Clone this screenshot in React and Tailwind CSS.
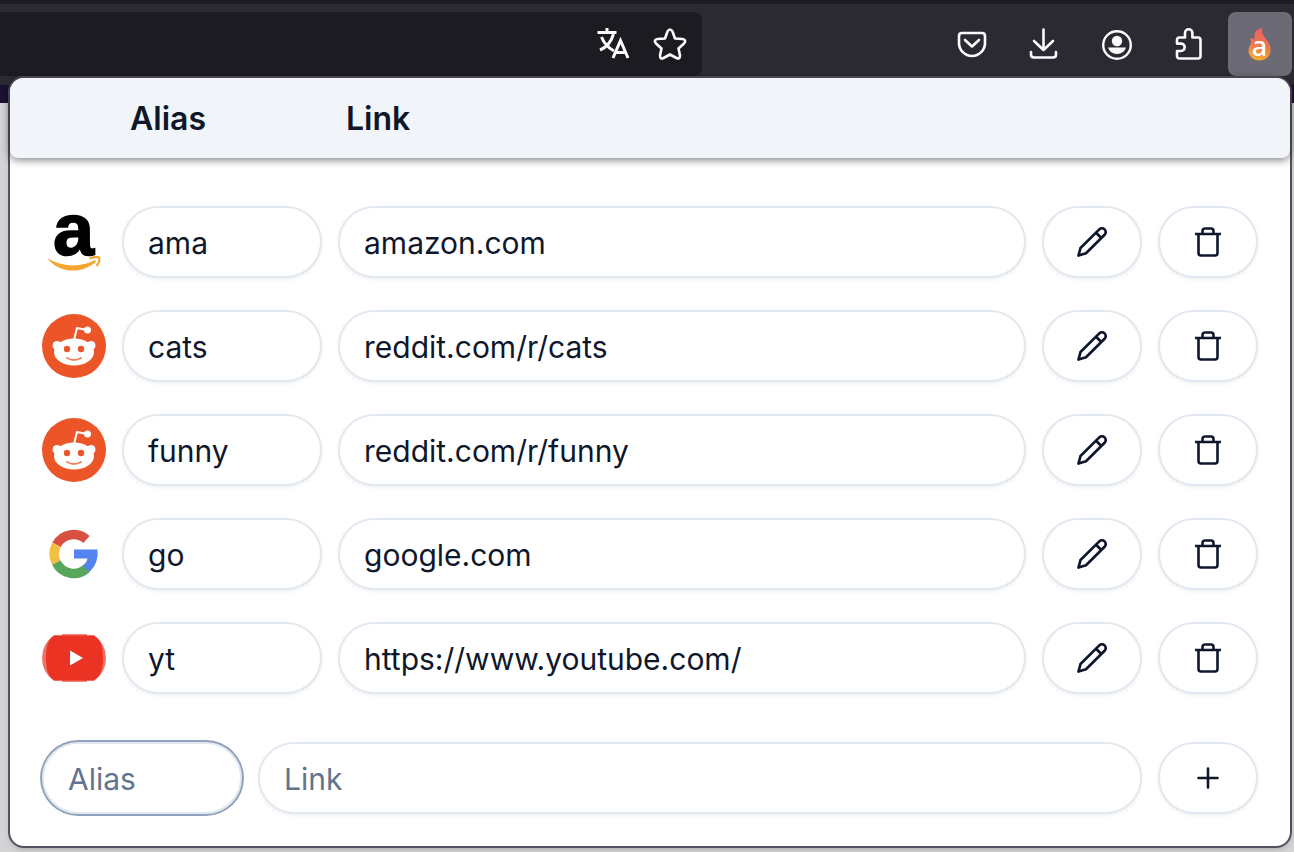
import React from 'react';

const shortcuts = [
  { alias: 'ama', link: 'amazon.com', icon: AmazonIcon },
  { alias: 'cats', link: 'reddit.com/r/cats', icon: RedditIcon },
  { alias: 'funny', link: 'reddit.com/r/funny', icon: RedditIcon },
  { alias: 'go', link: 'google.com', icon: GoogleIcon },
  { alias: 'yt', link: 'https://www.youtube.com/', icon: YoutubeIcon },
];

// Site icons
function AmazonIcon() {
  return (
    <svg viewBox="0 0 64 64" className="size-16 shrink-0 overflow-visible" aria-hidden="true">
      <text x="31.500" y="45" textAnchor="middle" fontSize="74" fontWeight="700" fontFamily="Liberation Sans, sans-serif" fill="#000" stroke="#000" strokeWidth="1.500">a</text>
      <path d="M5 48C20 57 38 58 53 50L54 52C38 65 17 63 5 48Z" fill="#f4a62f" />
      <path d="M47.500 48.500C52 46.500 55 46.500 57 47.500C58 50 57 53 54.500 56" fill="none" stroke="#f4a62f" strokeWidth="2.200" strokeLinejoin="round" />
    </svg>
  );
}

function RedditIcon() {
  return (
    <svg viewBox="0 0 64 64" className="size-16 shrink-0" aria-hidden="true">
      <circle cx="32" cy="32" r="32" fill="#eb5528" />
      <path d="M32 26L35 14L45 16" fill="none" stroke="#fff" strokeWidth="2" strokeLinejoin="round" />
      <circle cx="45.500" cy="16" r="3.500" fill="#fff" />
      <circle cx="15" cy="31.500" r="4.500" fill="#fff" />
      <circle cx="49" cy="31.500" r="4.500" fill="#fff" />
      <ellipse cx="32" cy="38" rx="20" ry="13.500" fill="#fff" />
      <circle cx="25" cy="35" r="3.200" fill="#eb5528" />
      <circle cx="39" cy="35" r="3.200" fill="#eb5528" />
      <path d="M25 44Q32 48 39 44" fill="none" stroke="#f0825f" strokeWidth="2" strokeLinecap="round" />
    </svg>
  );
}

function GoogleIcon() {
  return (
    <svg viewBox="0 0 64 64" className="size-16 shrink-0" fill="none" strokeWidth="9.500" aria-hidden="true">
      <path d="M14.500 22.800A19.400 19.400 0 0 1 44.500 17.500" stroke="#d85140" />
      <path d="M14.300 40.700A19.400 19.400 0 0 1 14.500 22.800" stroke="#f1bf42" />
      <path d="M44.500 46.600A19.400 19.400 0 0 1 14.300 40.700" stroke="#58a55c" />
      <path d="M32 27.500H55.500Q57 41 47.500 50L40.500 43.500Q44.500 41 45.500 36.500H32Z" fill="#5383ec" stroke="none" />
    </svg>
  );
}

function YoutubeIcon() {
  return (
    <svg viewBox="0 0 64 64" className="size-16 shrink-0" aria-hidden="true">
      <path d="M12 9H52Q64 18 64 32Q64 46 52 55H12Q0 46 0 32Q0 18 12 9Z" fill="#ea3323" opacity="0.700" />
      <path d="M12 10H52Q61 14 61 32Q61 50 52 54H12Q4 50 4 32Q4 14 12 10Z" fill="#ea3323" />
      <path d="M20 8H45V10H20ZM20 54H45V56H20Z" fill="#ea3323" opacity="0.600" />
      <path d="M28 24.500L41 32L28 39.500Z" fill="#fff" />
    </svg>
  );
}

// Button icons
function PencilIcon() {
  return (
    <svg viewBox="0 0 32 32" className="size-8" fill="none" stroke="currentColor" strokeWidth="2.700" strokeLinejoin="round" aria-hidden="true">
      <path d="M2.500 29.500L4.500 22L23.300 3.400A3.700 3.700 0 0 1 28.600 8.700L10 27.300Z" />
      <path d="M20 6.700L25.300 12" />
    </svg>
  );
}

function TrashIcon() {
  return (
    <svg viewBox="0 0 32 32" className="size-8" fill="none" stroke="currentColor" strokeWidth="2.600" strokeLinejoin="round" aria-hidden="true">
      <path d="M3 8H29M10.500 8V5Q10.500 2.500 13 2.500H19Q21.500 2.500 21.500 5V8" />
      <path d="M6.500 8V27Q6.500 29.500 9 29.500H23Q25.500 29.500 25.500 27V8" />
    </svg>
  );
}

function PlusIcon() {
  return (
    <svg viewBox="0 0 32 32" className="size-8" stroke="currentColor" strokeWidth="2.600" strokeLinecap="round" aria-hidden="true">
      <path d="M6.500 16H25.500M16 6.500V25.500" />
    </svg>
  );
}

// Toolbar icons
const TranslateIcon = () => (
  <svg viewBox="0 0 36 36" className="size-9" fill="none" stroke="currentColor" strokeWidth="3" aria-hidden="true">
    <path d="M1.500 6.500H20.500M11 2V6.500M5.500 11Q9 20 18 25M17.500 8Q14 20 4 24" />
    <path d="M17 32L24.500 14.500L32 32M20 26.500H29" />
  </svg>
);

const StarIcon = () => (
  <svg viewBox="0 0 36 36" className="size-9" fill="none" stroke="currentColor" strokeWidth="2.600" strokeLinejoin="round" aria-hidden="true">
    <path d="M15.500 5.500Q18 1.500 20.500 5.500L23 12.500L30.500 13Q35 14 32 17.500L26.500 22.500L28 29.500Q28 33.500 24.500 32L18 28.500L11.500 32Q8 33.500 8 29.500L9.500 22.500L4 17.500Q1 14 5.500 13L13 12.500Z" />
  </svg>
);

const PocketIcon = () => (
  <svg viewBox="0 0 32 32" className="size-8" fill="none" stroke="currentColor" strokeWidth="2.600" strokeLinecap="round" strokeLinejoin="round" aria-hidden="true">
    <path d="M6 5H26Q29 5 29 8V15A13 13 0 0 1 3 15V8Q3 5 6 5Z" />
    <path d="M9 12L16 18.500L23 12" />
  </svg>
);

const DownloadIcon = () => (
  <svg viewBox="0 0 32 32" className="size-8" fill="none" stroke="currentColor" strokeWidth="2.600" strokeLinecap="round" strokeLinejoin="round" aria-hidden="true">
    <path d="M15.500 1.500V22M6 13L15.500 22L25 13M3 24V26.500Q3 29.500 6 29.500H25Q28 29.500 28 26.500V24" />
  </svg>
);

const AccountIcon = () => (
  <svg viewBox="0 0 32 32" className="size-8" aria-hidden="true">
    <circle cx="17" cy="17" r="13.800" fill="none" stroke="currentColor" strokeWidth="2.400" />
    <circle cx="17" cy="13" r="5.200" fill="currentColor" />
    <path d="M8 19.500H26Q24 26 17 26Q10 26 8 19.500Z" fill="currentColor" />
  </svg>
);

const ExtensionIcon = () => (
  <svg viewBox="0 0 32 32" className="size-8" fill="none" stroke="currentColor" strokeWidth="2.600" strokeLinejoin="round" aria-hidden="true">
    <path d="M13 9.500V5A3.700 3.700 0 0 1 20.400 5V9.500H26Q28.500 9.500 28.500 12V28Q28.500 30.500 26 30.500H7.500Q5 30.500 5 28V23H9A3.700 3.700 0 0 0 9 15.600H5V12Q5 9.500 7.500 9.500Z" />
  </svg>
);

const FlameIcon = () => (
  <svg viewBox="0 0 32 36" className="h-9 w-8 overflow-visible" aria-hidden="true">
    <defs>
      <linearGradient id="flame" x1="0.600" y1="0" x2="0.400" y2="1">
        <stop offset="0" stopColor="#f25e63" />
        <stop offset="0.500" stopColor="#ee7450" />
        <stop offset="1" stopColor="#f5b02e" />
      </linearGradient>
    </defs>
    <path d="M18.500 2C17 6 19 9 22 13C26 18 27 21 26.500 25C26 31 21 34.500 15.500 34.500C9 34.500 4.500 30 4.500 24.500C4.500 19 9 18 6 12.500C8.500 12 10.500 13 11.500 14.500C9 8 11 3 18.500 2Z" fill="url(#flame)" />
    <text x="15.500" y="30" textAnchor="middle" fontSize="27" fontWeight="500" fontFamily="Noto Sans, sans-serif" fill="#fff">a</text>
  </svg>
);

const ToolbarButton = ({ label, children }) => (
  <button type="button" aria-label={label} className="flex size-16 items-center justify-center rounded-lg">
    {children}
  </button>
);

const IconButton = ({ label, children }) => (
  <button
    type="button"
    aria-label={label}
    className="flex h-18 w-25 shrink-0 items-center justify-center rounded-full border-2 border-slate-200 bg-white shadow-[0_2px_4px_rgba(0,0,0,0.05)]"
  >
    {children}
  </button>
);

const field = 'h-18 rounded-full border-2 border-slate-200 bg-white px-6 pt-[2px] outline-none placeholder:text-slate-500';

export default function App() {
  return (
    <div className="min-h-screen bg-[#d4d4d6] font-['Inter',sans-serif] text-[30px] text-slate-900">
      {/* Browser toolbar */}
      <header className="flex h-[85px] items-start justify-between border-t-4 border-[#1c1b22] bg-[#2b2a33] pt-2 pr-[2px] text-[#fbfbfe]">
        <div className="flex h-16 w-[702px] items-center justify-end gap-5 rounded-r-lg bg-[#1c1b22] pr-[14px]">
          <button type="button" aria-label="Translate page"><TranslateIcon /></button>
          <button type="button" aria-label="Bookmark page"><StarIcon /></button>
        </div>
        <div className="flex items-center gap-2">
          <ToolbarButton label="Pocket"><PocketIcon /></ToolbarButton>
          <ToolbarButton label="Downloads"><DownloadIcon /></ToolbarButton>
          <ToolbarButton label="Account"><AccountIcon /></ToolbarButton>
          <ToolbarButton label="Extensions"><ExtensionIcon /></ToolbarButton>
          <button type="button" aria-label="Aliases" className="flex size-16 items-center justify-center rounded-lg bg-[#6c6b75]">
            <FlameIcon />
          </button>
        </div>
      </header>
      <div className="h-[18px] bg-[#1d1133]" />

      {/* Extension popup */}
      <main className="relative mr-[2px] mb-1 ml-2 -mt-[27px] rounded-2xl border-2 border-[#52525e] bg-white shadow-md">
        <div className="flex h-20 items-center gap-4 rounded-t-[14px] rounded-b-lg bg-slate-100 px-8 pt-[2px] text-[32px] font-semibold shadow-[0_2px_8px_rgba(0,0,0,0.5)]">
          <span className="w-16" />
          <h2 className="w-50 pl-2">Alias</h2>
          <h2 className="pl-2">Link</h2>
        </div>

        <div className="px-8 pt-12 pb-8">
          <ul className="flex flex-col gap-8">
            {shortcuts.map(({ alias, link, icon: Icon }) => (
              <li key={alias} className="flex items-center gap-4">
                <Icon />
                <input aria-label="Alias" defaultValue={alias} className={`${field} w-50 shadow-[0_2px_4px_rgba(0,0,0,0.05)]`} />
                <input aria-label="Link" defaultValue={link} className={`${field} min-w-0 flex-1 shadow-[0_2px_4px_rgba(0,0,0,0.05)]`} />
                <IconButton label={`Edit ${alias}`}><PencilIcon /></IconButton>
                <IconButton label={`Delete ${alias}`}><TrashIcon /></IconButton>
              </li>
            ))}
          </ul>

          <form className="mt-12 flex items-center gap-4">
            <input aria-label="New alias" placeholder="Alias" className={`${field} w-50 ring-2 ring-slate-400`} />
            <input aria-label="New link" placeholder="Link" className={`${field} min-w-0 flex-1 shadow-[0_2px_4px_rgba(0,0,0,0.05)]`} />
            <IconButton label="Add"><PlusIcon /></IconButton>
          </form>
        </div>
      </main>
    </div>
  );
}
